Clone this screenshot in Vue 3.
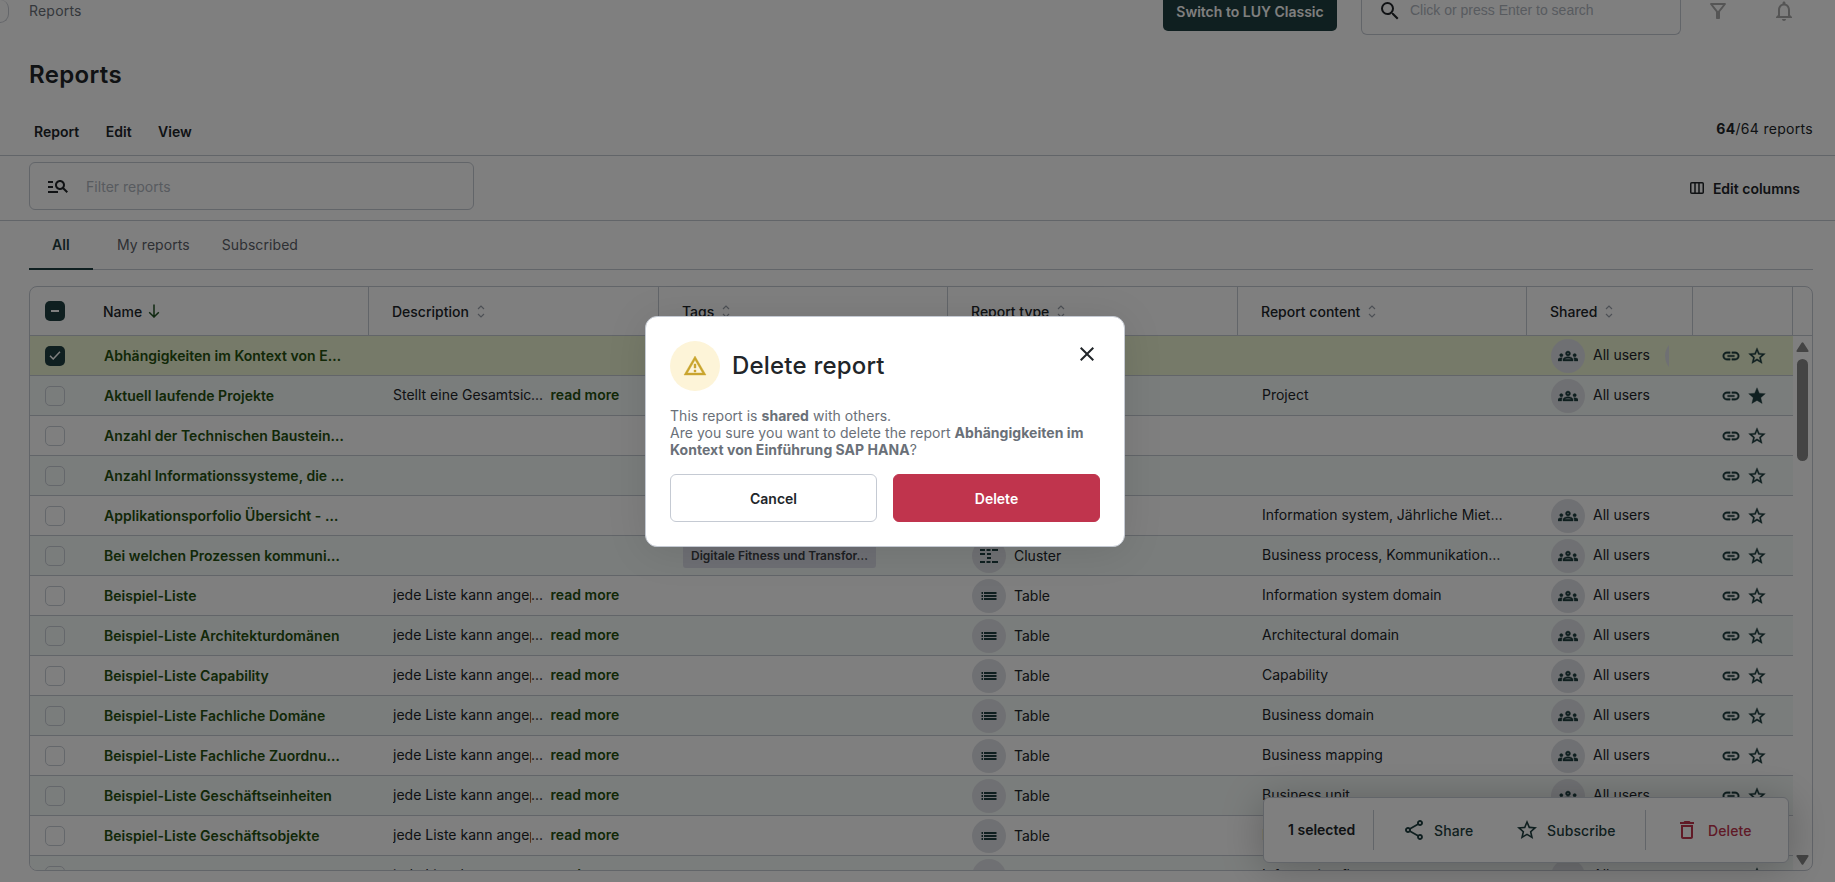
<script setup>
import { ref } from 'vue';

const icons = {
  search: 'M15.5 14h-.79l-.28-.27A6.47 6.47 0 0 0 16 9.5 6.5 6.5 0 1 0 9.5 16c1.61 0 3.09-.59 4.23-1.57l.27.28v.79l5 4.99L20.49 19l-4.99-5zm-6 0C7.01 14 5 11.99 5 9.5S7.01 5 9.5 5 14 7.01 14 9.5 11.99 14 9.5 14z',
  filter: 'M7 6h10l-5.01 6.3L7 6zm-2.75-.39C6.27 8.2 10 13 10 13v6c0 .55.45 1 1 1h2c.55 0 1-.45 1-1v-6s3.72-4.8 5.74-7.39A.998.998 0 0 0 18.95 4H5.04c-.83 0-1.3.95-.79 1.61z',
  bell: 'M12 22c1.1 0 2-.9 2-2h-4c0 1.1.9 2 2 2zm6-6v-5c0-3.07-1.63-5.64-4.5-6.32V4c0-.83-.67-1.5-1.5-1.5s-1.5.67-1.5 1.5v.68C7.64 5.36 6 7.92 6 11v5l-2 2v1h16v-1l-2-2zm-2 1H8v-6c0-2.48 1.51-4.5 4-4.5s4 2.02 4 4.5v6z',
  manageSearch: 'M7 9H2V7h5v2zm0 3H2v2h5v-2zm13.59 7l-3.83-3.83c-.8.52-1.74.83-2.76.83-2.76 0-5-2.24-5-5s2.24-5 5-5 5 2.24 5 5c0 1.02-.31 1.96-.83 2.75L22 17.59 20.59 19zM17 11c0-1.65-1.35-3-3-3s-3 1.35-3 3 1.35 3 3 3 3-1.35 3-3zM2 19h10v-2H2v2z',
  groups: 'M4 13c1.1 0 2-.9 2-2s-.9-2-2-2-2 .9-2 2 .9 2 2 2zm1.13 1.1c-.37-.06-.74-.1-1.13-.1-.99 0-1.93.21-2.78.58C.48 14.9 0 15.62 0 16.43V18h4.5v-1.61c0-.83.23-1.61.63-2.29zM20 13c1.1 0 2-.9 2-2s-.9-2-2-2-2 .9-2 2 .9 2 2 2zm4 3.43c0-.81-.48-1.53-1.22-1.85-.85-.37-1.79-.58-2.78-.58-.39 0-.76.04-1.13.1.4.68.63 1.46.63 2.29V18H24v-1.57zm-7.76-2.78c-1.17-.52-2.61-.9-4.24-.9-1.63 0-3.07.39-4.24.9C6.68 14.13 6 15.21 6 16.39V18h12v-1.61c0-1.18-.68-2.26-1.76-2.74zM8.07 16c.09-.23.13-.39.91-.69.97-.38 1.99-.56 3.02-.56s2.05.18 3.02.56c.77.3.81.46.91.69H8.07zM12 8c.55 0 1 .45 1 1s-.45 1-1 1-1-.45-1-1 .45-1 1-1m0-2c-1.66 0-3 1.34-3 3s1.34 3 3 3 3-1.34 3-3-1.34-3-3-3z',
  link: 'M3.9 12c0-1.71 1.39-3.1 3.1-3.1h4V7H7c-2.76 0-5 2.24-5 5s2.24 5 5 5h4v-1.9H7c-1.71 0-3.1-1.39-3.1-3.1zM8 13h8v-2H8v2zm9-6h-4v1.9h4c1.71 0 3.1 1.39 3.1 3.1s-1.39 3.1-3.1 3.1h-4V17h4c2.76 0 5-2.24 5-5s-2.24-5-5-5z',
  star: 'M22 9.24l-7.19-.62L12 2 9.19 8.63 2 9.24l5.46 4.73L5.82 21 12 17.27 18.18 21l-1.63-7.03L22 9.24zM12 15.4l-3.76 2.27 1-4.28-3.32-2.88 4.38-.38L12 6.1l1.71 4.04 4.38.38-3.32 2.88 1 4.28L12 15.4z',
  starFull: 'M12 17.27L18.18 21l-1.64-7.03L22 9.24l-7.19-.61L12 2 9.19 8.63 2 9.24l5.46 4.73L5.82 21z',
  share: 'M18 16.08c-.76 0-1.44.3-1.96.77L8.91 12.7c.05-.23.09-.46.09-.7s-.04-.47-.09-.7l7.05-4.11c.54.5 1.25.81 2.04.81 1.66 0 3-1.34 3-3s-1.34-3-3-3-3 1.34-3 3c0 .24.04.47.09.7L8.04 9.81C7.5 9.31 6.79 9 6 9c-1.66 0-3 1.34-3 3s1.34 3 3 3c.79 0 1.5-.31 2.04-.81l7.12 4.16c-.05.21-.08.43-.08.65 0 1.61 1.31 2.92 2.92 2.92s2.92-1.31 2.92-2.92-1.31-2.92-2.92-2.92zM18 4c.55 0 1 .45 1 1s-.45 1-1 1-1-.45-1-1 .45-1 1-1zM6 13c-.55 0-1-.45-1-1s.45-1 1-1 1 .45 1 1-.45 1-1 1zm12 7.02c-.55 0-1-.45-1-1s.45-1 1-1 1 .45 1 1-.45 1-1 1z',
  trash: 'M6 19c0 1.1.9 2 2 2h8c1.1 0 2-.9 2-2V7H6v12zM8 9h8v10H8V9zm7.5-5l-1-1h-5l-1 1H5v2h14V4h-3.5z',
  warning: 'M12 5.99L19.53 19H4.47L12 5.99M12 2L1 21h22L12 2zm1 14h-2v2h2v-2zm0-6h-2v4h2v-4z',
  close: 'M19 6.41L17.59 5 12 10.59 6.41 5 5 6.41 10.59 12 5 17.59 6.41 19 12 13.41 17.59 19 19 17.59 13.41 12z',
  list: 'M1.500 5h1.500v2h-1.500zM4 5h12.500v2H4zM1.500 8h1.500v2h-1.500zM4 8h12.500v2H4zM1.500 11h1.500v2h-1.500zM4 11h12.500v2H4z',
  cluster: 'M0 2h5v2H0zM6.500 2h4v2h-4zM12 2h6v2h-6zM0 6h5v2H0zM7 6h4v2H7zM7 10h4v2H7zM0 14h5v2H0zM6.500 14h4v2h-4zM12 14h6v2h-6z'
};

const menu = ['Report', 'Edit', 'View'];
const tabs = ['All', 'My reports', 'Subscribed'];
const activeTab = ref('All');
const columns = ['Description', 'Tags', 'Report type', 'Report content', 'Shared'];

const list = 'jede Liste kann angep';

const reports = ref([
  { name: 'Abhängigkeiten im Kontext von E…', shared: true, more: true, selected: true },
  { name: 'Aktuell laufende Projekte', desc: 'Stellt eine Gesamtsic', content: 'Project', shared: true, starred: true },
  { name: 'Anzahl der Technischen Baustein…' },
  { name: 'Anzahl Informationssysteme, die …' },
  { name: 'Applikationsporfolio Übersicht - …', content: 'Information system, Jährliche Miet…', shared: true },
  { name: 'Bei welchen Prozessen kommuni…', tag: 'Digitale Fitness und Transfor…', type: 'Cluster', content: 'Business process, Kommunikation…', shared: true },
  { name: 'Beispiel-Liste', desc: list, type: 'Table', content: 'Information system domain', shared: true },
  { name: 'Beispiel-Liste Architekturdomänen', desc: list, type: 'Table', content: 'Architectural domain', shared: true },
  { name: 'Beispiel-Liste Capability', desc: list, type: 'Table', content: 'Capability', shared: true },
  { name: 'Beispiel-Liste Fachliche Domäne', desc: list, type: 'Table', content: 'Business domain', shared: true },
  { name: 'Beispiel-Liste Fachliche Zuordnu…', desc: list, type: 'Table', content: 'Business mapping', shared: true },
  { name: 'Beispiel-Liste Geschäftseinheiten', desc: list, type: 'Table', content: 'Business unit', shared: true },
  { name: 'Beispiel-Liste Geschäftsobjekte', desc: list, type: 'Table', content: 'Business object', shared: true },
  { name: 'Beispiel-Liste', desc: list, type: 'Table', content: 'Information flow', shared: true }
]);

const showDialog = ref(true);
const closeDialog = () => {
  showDialog.value = false;
};
</script>

<template>
  <div class="page">
    <header class="topbar">
      <span class="collapse"></span>
      <span class="breadcrumb">Reports</span>
      <button class="classic">Switch to LUY Classic</button>
      <div class="search">
        <svg class="icon-24" viewBox="0 0 24 24"><path :d="icons.search" /></svg>
        <span>Click or press Enter to search</span>
      </div>
      <svg class="icon-24 muted filter" viewBox="0 0 24 24"><path :d="icons.filter" /></svg>
      <svg class="icon-24 muted bell" viewBox="0 0 24 24"><path :d="icons.bell" /></svg>
    </header>

    <h1>Reports</h1>

    <nav class="menu">
      <a v-for="item in menu" :key="item">{{ item }}</a>
      <span class="count"><b>64</b>/64 reports</span>
    </nav>

    <div class="toolbar">
      <div class="filter-input">
        <svg class="icon-24" viewBox="0 0 24 24"><path :d="icons.manageSearch" /></svg>
        <span>Filter reports</span>
      </div>
      <button class="edit-columns">
        <svg width="14" height="12" viewBox="0 0 14 12">
          <rect x=".75" y=".75" width="12.5" height="10.5" rx="1" />
          <path d="M5 1v10M9 1v10" />
        </svg>
        <span>Edit columns</span>
      </button>
    </div>

    <div class="tabs">
      <button
        v-for="tab in tabs"
        :key="tab"
        :class="{ active: tab === activeTab }"
        @click="activeTab = tab"
      >{{ tab }}</button>
    </div>

    <section class="table">
      <div class="row head">
        <div class="cell check"><span class="box on"><i class="dash"></i></span></div>
        <div class="cell name">
          Name
          <svg class="arrow" width="12" height="14" viewBox="0 0 12 14"><path d="M6 .5v12M1.2 8.2L6 13l4.8-4.8" /></svg>
        </div>
        <div v-for="col in columns" :key="col" class="cell sep">
          {{ col }}
          <svg class="sort" width="8" height="13" viewBox="0 0 8 13"><path d="M1 4l3-3 3 3M1 9l3 3 3-3" /></svg>
        </div>
        <div class="cell sep"></div>
        <div class="cell sep"></div>
      </div>
      <div class="body">
        <div class="rows">
          <div v-for="(report, i) in reports" :key="i" class="row" :class="{ selected: report.selected }">
            <div class="cell check">
              <span class="box" :class="{ on: report.selected }">
                <svg v-if="report.selected" width="12" height="9" viewBox="0 0 12 9"><path d="M1 4.8L4.2 8 11 .8" /></svg>
              </span>
            </div>
            <div class="cell name">{{ report.name }}</div>
            <div class="cell desc">
              <template v-if="report.desc">
                <span class="clip">{{ report.desc }}</span><span>...</span>
                <a>read more</a>
              </template>
            </div>
            <div class="cell"><span v-if="report.tag" class="tag">{{ report.tag }}</span></div>
            <div class="cell">
              <template v-if="report.type">
                <span class="avatar">
                  <svg width="18" height="18" viewBox="0 0 18 18"><path :d="report.type === 'Table' ? icons.list : icons.cluster" /></svg>
                </span>
                <span class="label">{{ report.type }}</span>
              </template>
            </div>
            <div class="cell content">{{ report.content }}</div>
            <div class="cell shared">
              <template v-if="report.shared">
                <span class="avatar">
                  <svg class="icon-20 strong" viewBox="0 0 24 24"><path :d="icons.groups" /></svg>
                </span>
                <span class="label">All users</span>
                <span v-if="report.more" class="peek"><span class="avatar"></span></span>
              </template>
            </div>
            <div class="cell actions">
              <svg class="icon-20 strong" viewBox="0 0 24 24"><path :d="icons.link" /></svg>
              <svg class="icon-20 strong" viewBox="0 0 24 24"><path :d="report.starred ? icons.starFull : icons.star" /></svg>
            </div>
          </div>
        </div>
        <div class="scrollbar">
          <svg width="13" height="11" viewBox="0 0 13 11"><path d="M5.6.8Q6.5-.2 7.4.8l5 7.6q.7 1.6-.9 1.6h-10Q0 10 .6 8.4z" /></svg>
          <span class="thumb"></span>
          <svg class="down" width="13" height="11" viewBox="0 0 13 11"><path d="M5.6.8Q6.5-.2 7.4.8l5 7.6q.7 1.6-.9 1.6h-10Q0 10 .6 8.4z" /></svg>
        </div>
      </div>
    </section>

    <div class="selection">
      <span class="selected-count">1 selected</span>
      <button class="share"><svg class="icon-24" viewBox="0 0 24 24"><path :d="icons.share" /></svg>Share</button>
      <button class="subscribe"><svg class="icon-24" viewBox="0 0 24 24"><path :d="icons.star" /></svg>Subscribe</button>
      <button class="remove"><svg class="icon-24" viewBox="0 0 24 24"><path :d="icons.trash" /></svg>Delete</button>
    </div>

    <div v-if="showDialog" class="overlay">
      <div class="dialog" role="dialog">
        <div class="dialog-head">
          <span class="warn"><svg class="icon-24 strong" viewBox="0 0 24 24"><path :d="icons.warning" /></svg></span>
          <h2>Delete report</h2>
          <button class="close" aria-label="Close" @click="closeDialog">
            <svg class="icon-24" viewBox="0 0 24 24"><path :d="icons.close" /></svg>
          </button>
        </div>
        <p>
          This report is <b>shared</b> with others.<br />
          Are you sure you want to delete the report <b>Abhängigkeiten im Kontext von Einführung SAP HANA</b>?
        </p>
        <div class="dialog-actions">
          <button @click="closeDialog">Cancel</button>
          <button class="danger" @click="closeDialog">Delete</button>
        </div>
      </div>
    </div>
  </div>
</template>

<style>
body {
  margin: 0;
  overflow: hidden;
}
</style>

<style scoped>
.page {
  position: relative;
  display: flex;
  flex-direction: column;
  width: 100%;
  height: 882px;
  box-sizing: border-box;
  overflow: hidden;
  background: #fff;
  color: #212529;
  font-family: Inter, "Liberation Sans", sans-serif;
  font-size: 14px;
  line-height: 17px;
}

.page * {
  box-sizing: border-box;
}

button {
  font: inherit;
  color: inherit;
  background: none;
  border: none;
  padding: 0;
  letter-spacing: inherit;
}

svg {
  flex: none;
  fill: currentColor;
}

.icon-24 {
  width: 24px;
  height: 24px;
}

.icon-20 {
  width: 20px;
  height: 20px;
}

.strong {
  stroke: currentColor;
  stroke-width: .4;
}

.topbar {
  display: flex;
  align-items: flex-start;
  height: 35px;
  flex: none;
}

.collapse {
  width: 9px;
  height: 23px;
  border: 1px solid #c8ccd4;
  border-left: none;
  border-top: none;
  border-radius: 0 11px 12px 0;
}

.breadcrumb {
  margin: 2px auto 0 20px;
  color: #6a7078;
  letter-spacing: .2px;
}

.classic {
  width: 174px;
  height: 31px;
  padding-bottom: 9px;
  border-radius: 0 0 5px 5px;
  background: #1f3f40;
  color: #fff;
  font-weight: 600;
}

.search {
  display: flex;
  gap: 8px;
  width: 320px;
  height: 35px;
  margin-left: 24px;
  padding: 0 0 0 16px;
  border: 1px solid #c5cad3;
  border-top: none;
  border-radius: 0 0 6px 6px;
}

.search svg {
  margin-top: -1px;
}

.search span {
  margin-top: 2px;
  color: #b0b6be;
  font-family: "Liberation Sans", sans-serif;
}

.muted {
  color: #aaa;
}

.filter {
  margin: -1px 0 0 25px;
}

.bell {
  margin: -1px 39px 0 42px;
}

h1 {
  margin: 24px 0 0 29px;
  font-size: 24px;
  font-weight: 600;
  line-height: 31px;
  letter-spacing: .35px;
}

.menu {
  display: flex;
  gap: 26.5px;
  height: 66px;
  padding: 33px 22px 0 34px;
  border-bottom: 1px solid #c5cad3;
  font-weight: 600;
}

.count {
  margin: -3px 0 0 auto;
  font-weight: 400;
  letter-spacing: .3px;
}

.toolbar {
  display: flex;
  justify-content: space-between;
  height: 65px;
  padding: 6px 35px 0 29px;
  border-bottom: 1px solid #c5cad3;
}

.filter-input {
  display: flex;
  align-items: center;
  gap: 16px;
  width: 445px;
  height: 48px;
  padding-left: 16px;
  border: 1px solid #c5cad3;
  border-radius: 6px;
}

.filter-input span {
  color: #b0b6be;
}

.edit-columns {
  display: flex;
  align-items: center;
  gap: 9px;
  height: 52px;
  font-weight: 600;
}

.edit-columns svg {
  fill: none;
  stroke: currentColor;
  stroke-width: 1.5;
}

.tabs {
  display: flex;
  height: 49px;
  margin: 0 22px 0 29px;
  border-bottom: 1px solid #c5cad3;
}

.tabs button {
  height: 49px;
  padding: 0 16px 2px;
  color: #5c6168;
  letter-spacing: .08px;
}

.tabs .active {
  width: 64px;
  margin-right: 8px;
  padding-bottom: 0;
  border-bottom: 2px solid #1f3f40;
  color: #1f3f40;
  font-weight: 600;
}

.table {
  display: flex;
  flex-direction: column;
  width: 1784px;
  height: 585px;
  margin: 16px 0 0 29px;
  border: 1px solid #c5cad3;
  border-radius: 8px;
  overflow: hidden;
}

.row {
  display: grid;
  grid-template-columns: 48px 290px 290px 289px 290px 289px 166px 100px;
  height: 40px;
  border-bottom: 1px solid #c5cad3;
}

.row:nth-child(even) {
  background: #f5faf8;
}

.row.selected {
  background: #ecf4d2;
}

.row.head {
  grid-template-columns: 48px 290px 290px 289px 290px 289px 166px 100px 1fr;
  height: 49px;
  flex: none;
  font-weight: 500;
}

.cell {
  display: flex;
  align-items: center;
  min-width: 0;
  padding-left: 25px;
  white-space: nowrap;
}

.head .sep {
  padding-left: 23px;
  border-left: 1px solid #c5cad3;
}

.cell.check {
  padding-left: 15px;
}

.box {
  display: flex;
  align-items: center;
  justify-content: center;
  width: 20px;
  height: 20px;
  border: 1px solid #c9ced6;
  border-radius: 5px;
}

.box.on {
  border: none;
  background: #1f3f40;
}

.box svg {
  fill: none;
  stroke: #fff;
  stroke-width: 1.5;
}

.dash {
  width: 8px;
  height: 2px;
  background: #fff;
}

.arrow {
  margin-left: 6px;
  fill: none;
  stroke: #1f5020;
  stroke-width: 1.5;
}

.sort {
  margin-left: 8px;
  fill: none;
  stroke: #9aa1ab;
  stroke-width: 1.2;
}

.body {
  display: flex;
  flex: 1;
  min-height: 0;
}

.rows {
  width: 1763px;
  overflow: hidden;
}

.rows .name {
  padding-left: 26px;
  color: #24500f;
  font-weight: 600;
  letter-spacing: .03px;
}

.desc,
.content {
  padding-bottom: 2px;
}

.clip {
  max-width: 138px;
  overflow: hidden;
}

.desc a {
  margin-left: 7.5px;
  color: #24500f;
  font-weight: 600;
}

.tag {
  height: 24px;
  padding: 0 8px;
  border-radius: 3px;
  background: #dcdfe8;
  color: #3c4046;
  font-size: 12px;
  font-weight: 600;
  line-height: 24px;
}

.avatar {
  display: flex;
  align-items: center;
  justify-content: center;
  flex: none;
  width: 34px;
  height: 34px;
  border-radius: 50%;
  background: #dfe1e6;
  color: #1f3f40;
}

.label {
  margin-left: 8px;
}

.shared .label {
  padding-bottom: 2px;
}

.peek {
  width: 4px;
  margin-left: 15px;
  overflow: hidden;
}

.rows .actions {
  gap: 6px;
  padding-left: 29px;
  color: #1f3f40;
}

.scrollbar {
  display: flex;
  flex-direction: column;
  align-items: center;
  flex: 1;
  padding: 6px 0 5px;
  color: #888;
}

.thumb {
  width: 11px;
  height: 102px;
  margin-top: 6px;
  border-radius: 6px;
  background: #888;
}

.down {
  margin-top: auto;
  transform: rotate(180deg);
}

.selection {
  position: absolute;
  top: 797px;
  left: 1263px;
  display: flex;
  align-items: center;
  width: 526px;
  height: 66px;
  border: 1px solid #c5cad3;
  border-radius: 6px;
  background: #fff;
  box-shadow: 0 4px 40px rgba(0, 0, 0, .25);
  color: #1f3f40;
  font-weight: 500;
  letter-spacing: .1px;
}

.selected-count {
  width: 110px;
  height: 40px;
  padding-left: 24px;
  border-right: 1px solid #c5cad3;
  color: #212529;
  font-weight: 600;
  letter-spacing: 0;
  line-height: 40px;
}

.selection button {
  display: flex;
  align-items: center;
  gap: 8px;
  height: 40px;
}

.share {
  width: 141px;
  padding-left: 28px;
}

.subscribe {
  width: 131px;
  border-right: 1px solid #c5cad3;
}

.selection .remove {
  gap: 9px;
  padding-left: 29px;
  color: #c0344d;
}

.overlay {
  position: absolute;
  inset: 0;
  background: rgba(0, 0, 0, .5);
}

.dialog {
  position: absolute;
  top: 316px;
  left: 645px;
  width: 480px;
  height: 231px;
  padding: 24px;
  border: 1px solid #c5cad3;
  border-radius: 12px;
  background: #fff;
  box-shadow: 0 4px 40px rgba(0, 0, 0, .1);
}

.dialog-head {
  display: flex;
  align-items: center;
  height: 50px;
}

.warn {
  display: flex;
  align-items: center;
  justify-content: center;
  width: 50px;
  height: 50px;
  border-radius: 50%;
  background: #fdf4d8;
  color: #c9a52e;
}

h2 {
  margin: 0 auto 0 12px;
  font-size: 24px;
  font-weight: 500;
  line-height: 30px;
  letter-spacing: .2px;
}

.close {
  height: 24px;
  margin: -24px 1px 0 0;
}

.dialog p {
  margin: 16px 0;
  color: #6a7078;
  letter-spacing: .04px;
}

.dialog-actions {
  display: flex;
  gap: 16px;
}

.dialog-actions button {
  flex: 1;
  height: 48px;
  border: 1px solid #c5cad3;
  border-radius: 6px;
  font-weight: 600;
}

.dialog-actions .danger {
  border-color: #c0344d;
  background: #c0344d;
  color: #fff;
}
</style>
